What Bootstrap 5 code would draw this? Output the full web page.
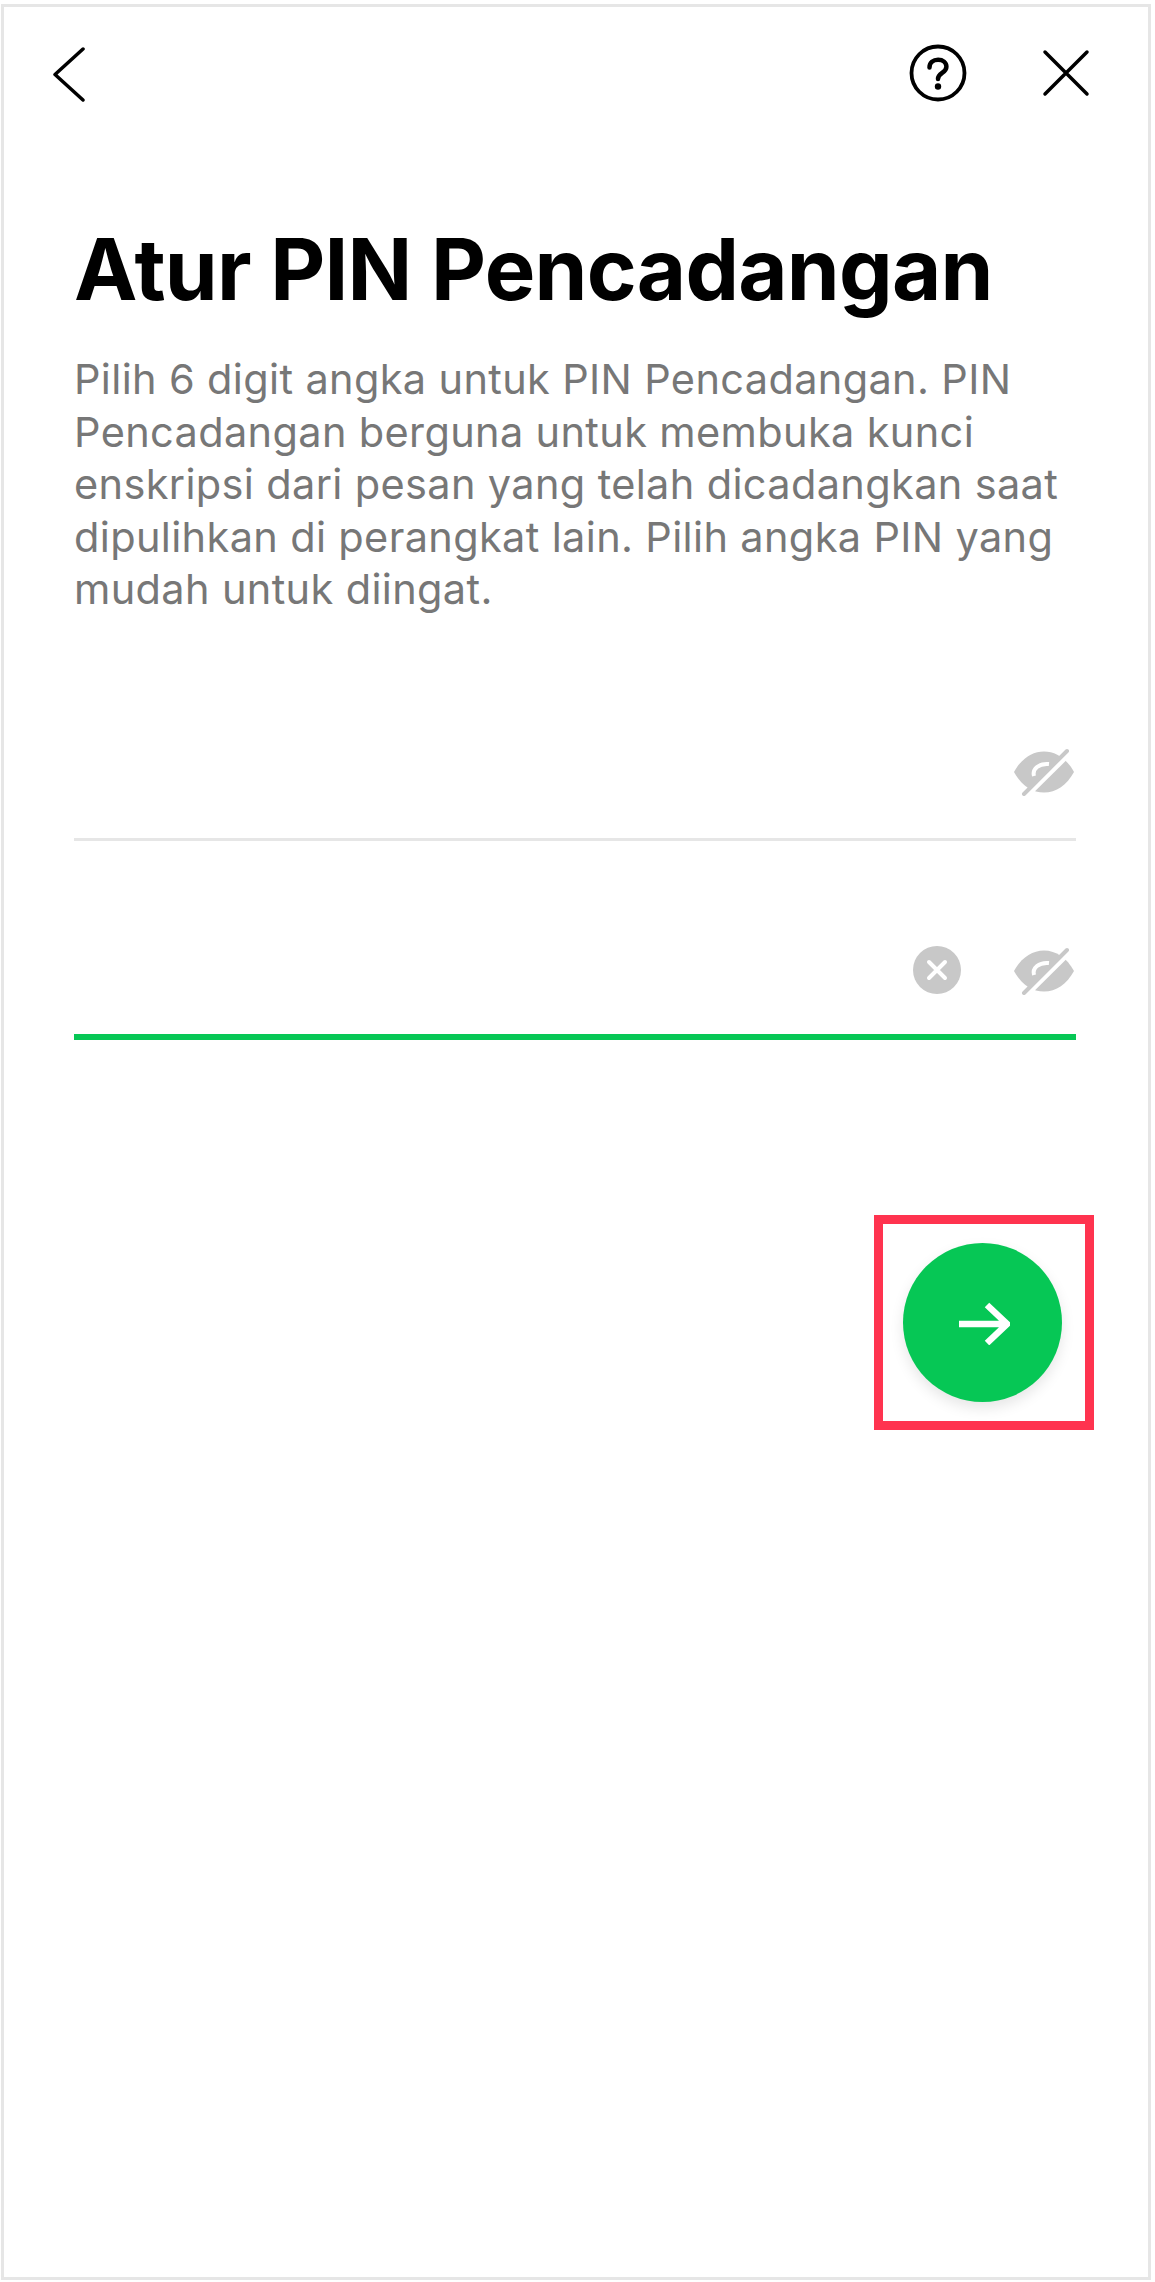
<!DOCTYPE html>
<html lang="id">
<head>
<meta charset="UTF-8" />
<meta name="viewport" content="width=device-width, initial-scale=1" />
<title>Atur PIN Pencadangan</title>
<link href="https://cdn.jsdelivr.net/npm/bootstrap@5.3.0/dist/css/bootstrap.min.css" rel="stylesheet" />
<style>
  body {
    background: #fff;
    font-family: Inter, "Liberation Sans", sans-serif;
  }
  .phone-frame {
    width: 1150px;
    height: 2276px;
    margin: 4px 0 0 1px;
    border: 3px solid #e6e6e6;
    padding: 0 72px 0 70px;
  }
  .top-bar {
    height: 97px;
    padding-top: 42px;
    margin-left: -22px;
    margin-right: -14px;
  }
  .back-icon { width: 34px; height: 55px; margin-top: -2px; }
  .help-icon { width: 60px; height: 60px; margin-right: 74px; margin-top: -6px; }
  .close-icon { width: 48px; height: 48px; }
  .page-title {
    font-size: 85px;
    font-weight: 700;
    line-height: 100px;
    letter-spacing: -.75px;
    color: #000;
    margin: 116px 0 0;
    white-space: nowrap;
  }
  .page-desc {
    font-size: 41.5px;
    line-height: 52.5px;
    letter-spacing: .35px;
    color: #777;
    margin: 33px 0 0;
  }
  .pin-field {
    border-bottom: 3px solid #e6e6e6;
    padding-bottom: 42px;
  }
  .pin-first { height: 225.5px; }
  .pin-second { height: 199px; padding-bottom: 39px; border-bottom: 6px solid #06c755; }
  .eye-icon { width: 60px; height: 48px; margin-right: 2px; }
  .clear-icon { width: 48px; height: 48px; margin: 0 53px 1px 0; }
  .next-box {
    width: 220px;
    height: 215px;
    border: 9px solid #ff334f;
    margin: 175px -18px 0 0;
  }
  .next-btn {
    width: 159px;
    height: 159px;
    padding: 0;
    border: 0;
    margin-right: 3px;
    border-radius: 50%;
    background: #06c755;
    box-shadow: 0 6px 14px rgba(0, 0, 0, .1);
  }
  .next-btn svg { width: 54px; height: 44px; }
</style>
</head>
<body>

<div class="phone-frame">
  <div class="top-bar d-flex align-items-start">
    <svg class="back-icon" viewBox="0 0 34 55" fill="none" stroke="#000" stroke-width="3.5" stroke-linecap="round" stroke-linejoin="round"><path d="M31 2 3 27.500 31 53"/></svg>
    <div class="flex-grow-1"></div>
    <svg class="help-icon" viewBox="0 0 60 60" fill="none" stroke="#000"><circle cx="30" cy="30" r="26.500" stroke-width="3.800"/><path d="M21.500 24.500c0-5 3.800-7.800 8.600-7.800s8.300 2.800 8.300 7c0 6.500-8.400 6-8.400 12.300" stroke-width="4.500" stroke-linecap="round"/><circle cx="30" cy="43.500" r="3.200" fill="#000" stroke="none"/></svg>
    <svg class="close-icon" viewBox="0 0 48 48" fill="none" stroke="#000" stroke-width="3.500" stroke-linecap="round"><path d="M3 3 45 45M45 3 3 45"/></svg>
  </div>

  <h1 class="page-title">Atur PIN Pencadangan</h1>
  <p class="page-desc">Pilih 6 digit angka untuk PIN Pencadangan. PIN Pencadangan berguna untuk membuka kunci enskripsi dari pesan yang telah dicadangkan saat dipulihkan di perangkat lain. Pilih angka PIN yang mudah untuk diingat.</p>

  <div class="pin-field pin-first d-flex align-items-end justify-content-end">
    <svg class="eye-icon" viewBox="0 0 60 48"><use href="#eyeOff"/></svg>
  </div>
  <div class="pin-field pin-second d-flex align-items-end justify-content-end">
    <svg class="clear-icon" viewBox="0 0 48 48"><circle cx="24" cy="24" r="24" fill="#c8c8c8"/><path d="M16 16 32 32M32 16 16 32" stroke="#fff" stroke-width="4" stroke-linecap="round"/></svg>
    <svg class="eye-icon" viewBox="0 0 60 48"><use href="#eyeOff"/></svg>
  </div>

  <div class="d-flex justify-content-end">
    <div class="next-box d-flex align-items-center justify-content-center">
      <button class="next-btn d-flex align-items-center justify-content-center" type="button" aria-label="Berikutnya">
        <svg viewBox="-2 -1 54 44" fill="none" stroke="#fff" stroke-width="6.500"><path d="M1 22H49M29 3 49 22 29 41"/></svg>
      </button>
    </div>
  </div>
</div>

<svg width="0" height="0" class="d-block">
  <defs>
    <g id="eyeOff">
      <path d="M0 24C7 11 18 3.500 30 3.500S53 11 60 24C53 37 42 44.500 30 44.500S7 37 0 24Z" fill="#c8c8c8"/>
      <path d="M20 28C18 21 25 15 35 16" fill="none" stroke="#fff" stroke-width="4"/>
      <path d="M14.500 46.500 56 5.500" stroke="#fff" stroke-width="4.500"/>
      <path d="M10 46 53 3" stroke="#c8c8c8" stroke-width="4" stroke-linecap="round"/>
    </g>
  </defs>
</svg>

<script src="https://cdn.jsdelivr.net/npm/bootstrap@5.3.0/dist/js/bootstrap.bundle.min.js"></script>
</body>
</html>
